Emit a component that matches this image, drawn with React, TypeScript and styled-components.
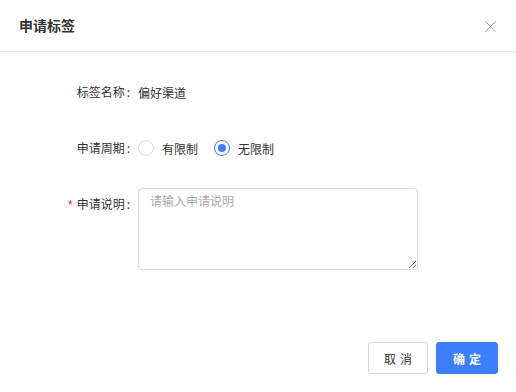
import styled, { createGlobalStyle } from "styled-components";

const GlobalStyle = createGlobalStyle`
  body {
    margin: 0;
    background: #ffffff;
    font-family: "Noto Sans CJK SC", "Noto Sans", "Liberation Sans", sans-serif;
    color: #333333;
  }
`;

const Dialog = styled.div`
  width: 516px;
  height: 392px;
  display: flex;
  flex-direction: column;
  background: #ffffff;
  box-sizing: border-box;
`;

const Header = styled.div`
  height: 51px;
  display: flex;
  align-items: center;
  justify-content: space-between;
  padding: 0 20px 0 19px;
  border-bottom: 1px solid #e8e8e8;
`;

const Title = styled.div`
  font-size: 14px;
  font-weight: 700;
  color: #333333;
  margin-top: -2px;
`;

const CloseButton = styled.button`
  border: none;
  background: none;
  padding: 0;
  margin-top: 2px;
  width: 12px;
  height: 12px;
  display: flex;
  align-items: center;
  justify-content: center;
  cursor: pointer;
`;

const Form = styled.div`
  display: grid;
  grid-template-columns: 138px 1fr;
  row-gap: 24px;
  padding-top: 24px;
`;

const Label = styled.div`
  height: 32px;
  line-height: 32px;
  font-size: 12px;
  text-align: right;
  color: #333333;
  white-space: nowrap;
`;

const Colon = styled.span`
  margin: 0 8px 0 2px;
`;

const Required = styled.span`
  color: #f5222d;
  margin-right: 4px;
  font-family: "Liberation Sans", sans-serif;
`;

const Field = styled.div`
  min-height: 32px;
  display: flex;
  align-items: center;
  font-size: 12px;
  color: #333333;
`;

const RadioGroup = styled.div`
  display: flex;
  align-items: center;
`;

const RadioItem = styled.label`
  display: flex;
  align-items: center;
  margin-right: 16px;
  cursor: pointer;
`;

const RadioCircle = styled.span<{ $checked?: boolean }>`
  width: 16px;
  height: 16px;
  box-sizing: border-box;
  border-radius: 50%;
  border: 1px solid ${(p) => (p.$checked ? "#3d7eff" : "#d9d9d9")};
  display: flex;
  align-items: center;
  justify-content: center;

  &::after {
    content: "";
    width: 8px;
    height: 8px;
    border-radius: 50%;
    background: #3d7eff;
    display: ${(p) => (p.$checked ? "block" : "none")};
  }
`;

const RadioText = styled.span`
  margin-left: 8px;
`;

const TextArea = styled.textarea`
  width: 280px;
  height: 82px;
  box-sizing: border-box;
  border: 1px solid #d9d9d9;
  border-radius: 4px;
  padding: 3px 11px;
  font-size: 12px;
  line-height: 18px;
  font-family: inherit;
  color: #333333;
  resize: vertical;
  outline: none;

  &::placeholder {
    color: #aaaaaa;
  }
`;

const Footer = styled.div`
  margin-top: auto;
  display: flex;
  justify-content: flex-end;
  gap: 8px;
  padding: 0 18px 18px 0;
`;

const Button = styled.button<{ $primary?: boolean }>`
  width: ${(p) => (p.$primary ? 62 : 60)}px;
  height: 32px;
  padding: 0;
  border-radius: 3px;
  font-size: 12px;
  font-family: inherit;
  white-space: nowrap;
  cursor: pointer;
  border: 1px solid ${(p) => (p.$primary ? "#3d7eff" : "#d9d9d9")};
  background: ${(p) => (p.$primary ? "#3d7eff" : "#ffffff")};
  color: ${(p) => (p.$primary ? "#ffffff" : "#333333")};
  font-weight: ${(p) => (p.$primary ? 700 : 400)};

  span {
    letter-spacing: 0.34em;
    margin-right: -0.34em;
  }
`;

export default function App() {
  return (
    <>
      <GlobalStyle />
      <Dialog>
        <Header>
          <Title>申请标签</Title>
          <CloseButton aria-label="关闭">
            <svg width="11" height="11" viewBox="0 0 11 11">
              <path d="M0.5 0.5 L10.5 10.5 M10.5 0.5 L0.5 10.5" stroke="#999999" strokeWidth="1" />
            </svg>
          </CloseButton>
        </Header>
        <Form>
          <Label>
            标签名称<Colon>:</Colon>
          </Label>
          <Field>偏好渠道</Field>

          <Label>
            申请周期<Colon>:</Colon>
          </Label>
          <Field>
            <RadioGroup>
              <RadioItem>
                <RadioCircle />
                <RadioText>有限制</RadioText>
              </RadioItem>
              <RadioItem>
                <RadioCircle $checked />
                <RadioText>无限制</RadioText>
              </RadioItem>
            </RadioGroup>
          </Field>

          <Label>
            <Required>*</Required>申请说明<Colon>:</Colon>
          </Label>
          <Field>
            <TextArea placeholder="请输入申请说明" />
          </Field>
        </Form>
        <Footer>
          <Button>
            <span>取消</span>
          </Button>
          <Button $primary>
            <span>确定</span>
          </Button>
        </Footer>
      </Dialog>
    </>
  );
}
